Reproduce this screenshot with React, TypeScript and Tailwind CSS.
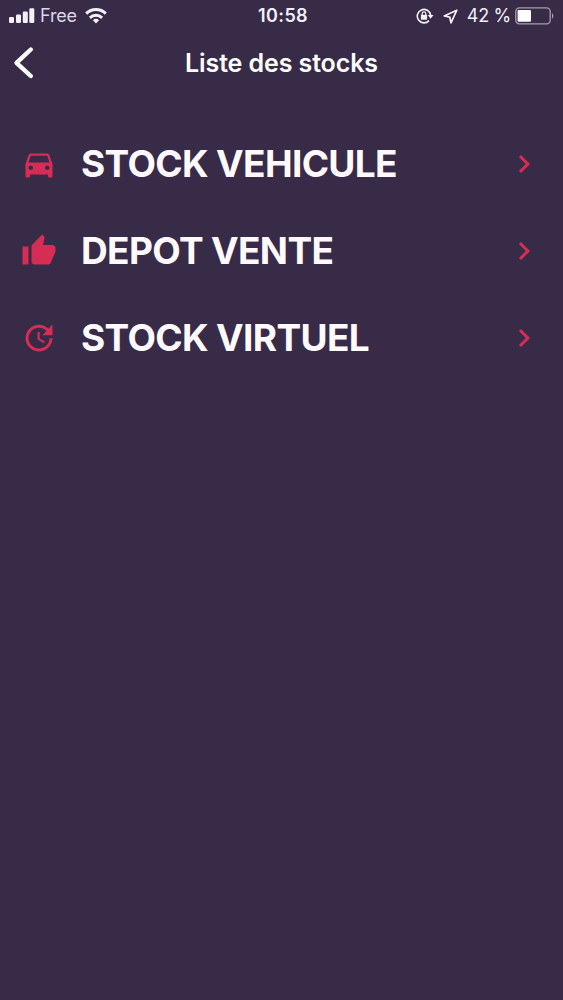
import type { IconType } from "react-icons";
import { MdChevronRight, MdDirectionsCar, MdThumbUp, MdUpdate } from "react-icons/md";

type Stock = {
  label: string;
  icon: IconType;
};

const stocks: Stock[] = [
  { label: "STOCK VEHICULE", icon: MdDirectionsCar },
  { label: "DEPOT VENTE", icon: MdThumbUp },
  { label: "STOCK VIRTUEL", icon: MdUpdate },
];

function SignalIcon() {
  return (
    <svg width="26" height="16" viewBox="0 0 26 16" fill="currentColor">
      <rect x="0" y="9" width="5" height="6" rx="1.2" />
      <rect x="7" y="6.6" width="5" height="8.4" rx="1.2" />
      <rect x="13.8" y="3.6" width="5" height="11.4" rx="1.2" />
      <rect x="20.3" y="0.3" width="5" height="14.7" rx="1.2" />
    </svg>
  );
}

function WifiIcon() {
  return (
    <svg width="22" height="16" viewBox="0 0 22 16" fill="none" stroke="currentColor" strokeWidth="3">
      <path d="M1.2 5.6a14 14 0 0 1 19.6 0" />
      <path d="M4.9 9.8a8.8 8.8 0 0 1 12.2 0" />
      <path d="M11 15.4l-3.1-3.1a4.5 4.5 0 0 1 6.2 0z" fill="currentColor" stroke="none" />
    </svg>
  );
}

function RotationLockIcon() {
  return (
    <svg width="18" height="16" viewBox="0 0 18 16" fill="none" stroke="currentColor" strokeWidth="1.6">
      <path d="M14.6 7A6.7 6.7 0 1 0 13 12.6" />
      <path d="M11.7 7.1h5.8l-2.9 3.7z" fill="currentColor" stroke="none" />
      <rect x="4.9" y="6.8" width="6.2" height="4.9" rx="0.7" fill="currentColor" stroke="none" />
      <path d="M6.2 7.4V5.6a1.8 1.8 0 0 1 3.6 0v1.8" strokeWidth="1.2" />
    </svg>
  );
}

function LocationIcon() {
  return (
    <svg width="15" height="15" viewBox="0 0 15 15" fill="none" stroke="currentColor" strokeWidth="1.7" strokeLinejoin="round">
      <path d="M13.8 1.2L1.2 7l5.6 1.2l1.2 5.6z" />
    </svg>
  );
}

function BatteryIcon() {
  return (
    <svg width="39" height="18" viewBox="0 0 39 18" fill="none">
      <rect x="0.8" y="0.8" width="34.4" height="16" rx="3.6" stroke="#a59fb0" strokeWidth="1.3" />
      <rect x="2.6" y="3" width="13.4" height="11.8" rx="1.2" fill="#fff" />
      <path d="M37 6.2c1.8.8 1.8 4.6 0 5.4z" fill="#a59fb0" />
    </svg>
  );
}

function StatusBar() {
  return (
    <div className="grid h-8 grid-cols-[1fr_auto_1fr] items-center pr-[9px] pl-[9px] text-[#f3f0f8]">
      <div className="flex items-center">
        <SignalIcon />
        <span className="ml-[5px] text-[18px] leading-none tracking-[-0.2px] text-[#dcd7e6]">Free</span>
        <span className="ml-2">
          <WifiIcon />
        </span>
      </div>
      <span className="pl-[3px] text-[18px] leading-none font-semibold tracking-[0.4px]">10:58</span>
      <div className="flex items-center justify-end">
        <RotationLockIcon />
        <span className="ml-[9px]">
          <LocationIcon />
        </span>
        <span className="ml-[9px] text-[18px] leading-none tracking-[-0.3px] whitespace-pre">42 %</span>
        <span className="ml-1">
          <BatteryIcon />
        </span>
      </div>
    </div>
  );
}

function Header() {
  return (
    <header className="grid h-[62px] grid-cols-[40px_1fr_40px] items-center text-white">
      <button aria-label="Retour" className="pl-3">
        <svg width="22" height="34" viewBox="0 0 22 34" fill="none" stroke="currentColor" strokeWidth="4.4" strokeLinecap="round" strokeLinejoin="round">
          <path d="M18.8 3.5L4.5 16.8L18.8 30" />
        </svg>
      </button>
      <h1 className="text-center text-[25px] leading-none font-semibold tracking-[-0.1px]">Liste des stocks</h1>
    </header>
  );
}

export default function App() {
  return (
    <div className="min-h-screen bg-[#372b48] font-['Inter','Liberation_Sans',sans-serif]">
      <StatusBar />
      <Header />

      <ul className="pt-[26px]">
        {stocks.map(({ label, icon: Icon }) => (
          <li key={label} className="flex h-[87px] items-center pr-[21px] pl-[21px]">
            <Icon className="size-9 shrink-0 text-[#d52d55]" />
            <span className="ml-6 flex-1 text-[37px] leading-none font-bold tracking-[-0.65px] text-[#fffaff]">
              {label}
            </span>
            <MdChevronRight className="size-9 shrink-0 text-[#d52d55]" />
          </li>
        ))}
      </ul>
    </div>
  );
}
